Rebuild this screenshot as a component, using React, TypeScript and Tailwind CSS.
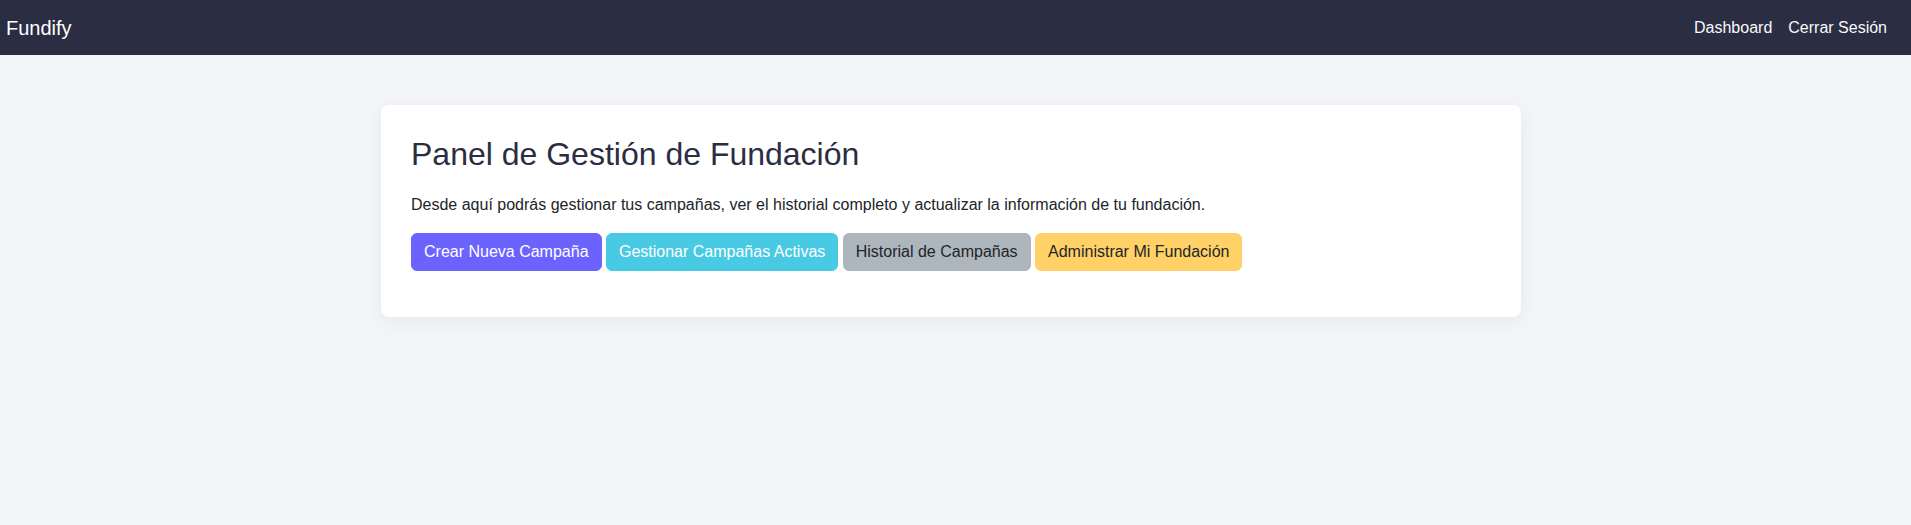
import React from "react";

const buttons = [
  { label: "Crear Nueva Campaña", className: "bg-[#6c63ff] border-[#6c63ff] text-white" },
  { label: "Gestionar Campañas Activas", className: "bg-[#48cae4] border-[#48cae4] text-white" },
  { label: "Historial de Campañas", className: "bg-[#adb5bd] border-[#adb5bd] text-[#212529]" },
  { label: "Administrar Mi Fundación", className: "bg-[#ffd166] border-[#ffd166] text-[#212529]" },
];

export default function App() {
  return (
    <div
      className="min-h-[525px] bg-[#f4f5f9] text-[#212529] text-base leading-6"
      style={{ fontFamily: '"Liberation Sans", Arial, sans-serif' }}
    >
      <nav className="h-[55px] bg-[#2b2d42] flex items-center pl-[6px] pr-4">
        <a href="#" className="text-white text-[20px] leading-[30px]">
          Fundify
        </a>
        <div className="flex-1"></div>
        <ul className="flex items-center">
          <li>
            <a href="#" className="px-2 text-[#f8f9fa]">
              Dashboard
            </a>
          </li>
          <li>
            <a href="#" className="px-2 text-[#f8f9fa]">
              Cerrar Sesión
            </a>
          </li>
        </ul>
      </nav>

      <main className="pt-[50px]">
        <div className="ml-[381px] w-[1140px] bg-white rounded-lg p-[30px] shadow-[0_4px_20px_rgba(0,0,0,0.06)]">
          <h2 className="text-[32px] leading-[1.2] font-normal text-[#2b2d42] mb-5">
            Panel de Gestión de Fundación
          </h2>
          <p className="mb-4">
            Desde aquí podrás gestionar tus campañas, ver el historial completo y
            actualizar la información de tu fundación.
          </p>
          <div className="flex gap-[4.45px] mb-4">
            {buttons.map((b) => (
              <button
                key={b.label}
                className={`px-3 py-1.5 border rounded-md text-base leading-6 ${b.className}`}
              >
                {b.label}
              </button>
            ))}
          </div>
        </div>
      </main>
    </div>
  );
}
